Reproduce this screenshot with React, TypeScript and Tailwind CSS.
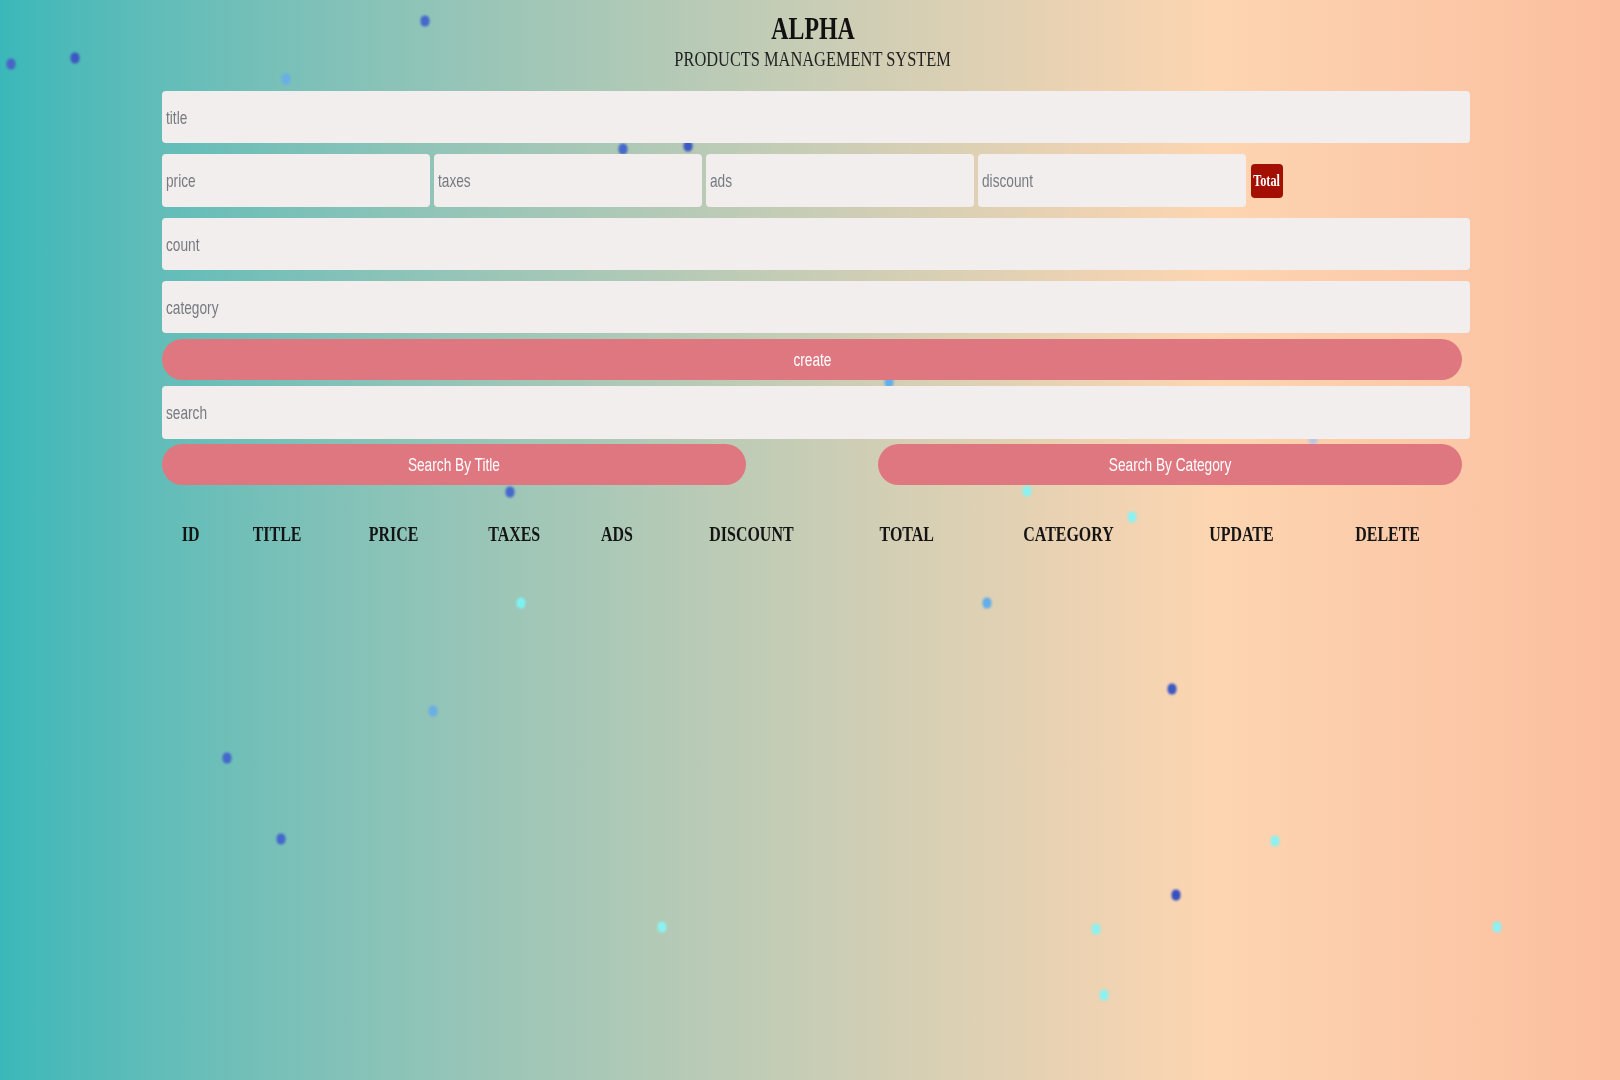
import React from 'react';

type Dot = { x: number; y: number; c: string };

const dots: Dot[] = [
  { x: 425, y: 21, c: 'bg-[#4468cc]' },
  { x: 75, y: 58, c: 'bg-[#3d58c2]' },
  { x: 11, y: 64, c: 'bg-[#4a64c6]' },
  { x: 286, y: 79, c: 'bg-[#6aaee6]' },
  { x: 623, y: 149, c: 'bg-[#4468cc]' },
  { x: 688, y: 146, c: 'bg-[#3d58c2]' },
  { x: 889, y: 382, c: 'bg-[#62aeea]' },
  { x: 1313, y: 439, c: 'bg-[#b9c7e6]' },
  { x: 510, y: 492, c: 'bg-[#4468cc]' },
  { x: 1027, y: 491, c: 'bg-[#8cf1f0]' },
  { x: 1132, y: 517, c: 'bg-[#8cf1f0]' },
  { x: 521, y: 603, c: 'bg-[#7ff0f0]' },
  { x: 987, y: 603, c: 'bg-[#62aeea]' },
  { x: 1172, y: 689, c: 'bg-[#3d58c2]' },
  { x: 433, y: 711, c: 'bg-[#6aaee6]' },
  { x: 227, y: 758, c: 'bg-[#4468cc]' },
  { x: 281, y: 839, c: 'bg-[#4468cc]' },
  { x: 1275, y: 841, c: 'bg-[#8cf1f0]' },
  { x: 1176, y: 895, c: 'bg-[#3550c0]' },
  { x: 662, y: 927, c: 'bg-[#8cf1f0]' },
  { x: 1096, y: 929, c: 'bg-[#8cf1f0]' },
  { x: 1497, y: 927, c: 'bg-[#8cf1f0]' },
  { x: 1104, y: 995, c: 'bg-[#8cf1f0]' },
];

const columns = [
  { label: 'ID', w: 'w-[58px]' },
  { label: 'TITLE', w: 'w-[114px]' },
  { label: 'PRICE', w: 'w-[120px]' },
  { label: 'TAXES', w: 'w-[121px]' },
  { label: 'ADS', w: 'w-[84px]' },
  { label: 'DISCOUNT', w: 'w-[184px]' },
  { label: 'TOTAL', w: 'w-[128px]' },
  { label: 'CATEGORY', w: 'w-[196px]' },
  { label: 'UPDATE', w: 'w-[148px]' },
  { label: 'DELETE', w: 'w-[145px]' },
];

function Field({ placeholder, className }: { placeholder: string; className: string }) {
  return (
    <div className={`flex items-center rounded-[4px] bg-[#f1eeed] pl-[4px] ${className}`}>
      <span className="inline-block origin-left scale-x-[0.72] text-[19px] leading-none text-[#777b80] whitespace-nowrap">
        {placeholder}
      </span>
    </div>
  );
}

function PinkButton({ label, className }: { label: string; className: string }) {
  return (
    <button className={`flex h-[41px] items-center justify-center rounded-[21px] bg-[#df7780] text-white ${className}`}>
      <span className="inline-block scale-x-[0.72] text-[19px] leading-none whitespace-nowrap">{label}</span>
    </button>
  );
}

export default function App() {
  return (
    <div className="relative min-h-[1080px] w-full overflow-hidden bg-linear-to-r from-[#3ab8b9] via-[#fdd5b1] via-75% to-[#fbbe9f] font-['Liberation_Sans',Arial,sans-serif]">
      {/* floating particles */}
      {dots.map((d, i) => (
        <span
          key={i}
          className={`absolute h-[11px] w-[9px] -translate-x-1/2 -translate-y-1/2 rounded-full blur-[0.8px] ${d.c}`}
          style={{ left: d.x, top: d.y }}
        />
      ))}

      <div className="relative ml-[162px] w-[1308px]">
        {/* Header */}
        <div className="w-[1302px] pt-[12px] text-center font-['Liberation_Serif','Times_New_Roman',serif]">
          <h1 className="text-[32px] font-bold leading-[32px] text-[#111]">
            <span className="inline-block scale-x-[0.745]">ALPHA</span>
          </h1>
          <p className="mt-[4px] text-[22px] leading-[22px] text-[#222]">
            <span className="inline-block scale-x-[0.745] whitespace-nowrap">PRODUCTS MANAGEMENT SYSTEM</span>
          </p>
        </div>

        {/* Form */}
        <div className="mt-[21px] flex flex-col">
          <Field placeholder="title" className="h-[52px] w-[1308px]" />

          <div className="mt-[11px] flex items-center gap-[4px]">
            <Field placeholder="price" className="h-[53px] w-[268px]" />
            <Field placeholder="taxes" className="h-[53px] w-[268px]" />
            <Field placeholder="ads" className="h-[53px] w-[268px]" />
            <Field placeholder="discount" className="h-[53px] w-[268px]" />
            <div className="ml-[1px] flex h-[34px] w-[32px] items-center justify-center rounded-[4px] bg-[#a30f02] font-['Liberation_Serif',serif] font-bold text-white">
              <span className="inline-block scale-x-[0.72] text-[17px] leading-none">Total</span>
            </div>
          </div>

          <Field placeholder="count" className="mt-[11px] h-[52px] w-[1308px]" />
          <Field placeholder="category" className="mt-[11px] h-[52px] w-[1308px]" />

          <PinkButton label="create" className="mt-[6px] w-[1300px]" />

          <Field placeholder="search" className="mt-[6px] h-[53px] w-[1308px]" />

          <div className="mt-[5px] flex w-[1300px] justify-between">
            <PinkButton label="Search By Title" className="w-[584px]" />
            <PinkButton label="Search By Category" className="w-[584px]" />
          </div>
        </div>

        {/* Table head */}
        <div className="mt-[39px] flex font-['Liberation_Serif','Times_New_Roman',serif] text-[21px] font-bold leading-[21px] text-[#141414]">
          {columns.map((c) => (
            <div key={c.label} className={`${c.w} text-center`}>
              <span className="inline-block scale-x-[0.76] whitespace-nowrap">{c.label}</span>
            </div>
          ))}
        </div>
      </div>
    </div>
  );
}
